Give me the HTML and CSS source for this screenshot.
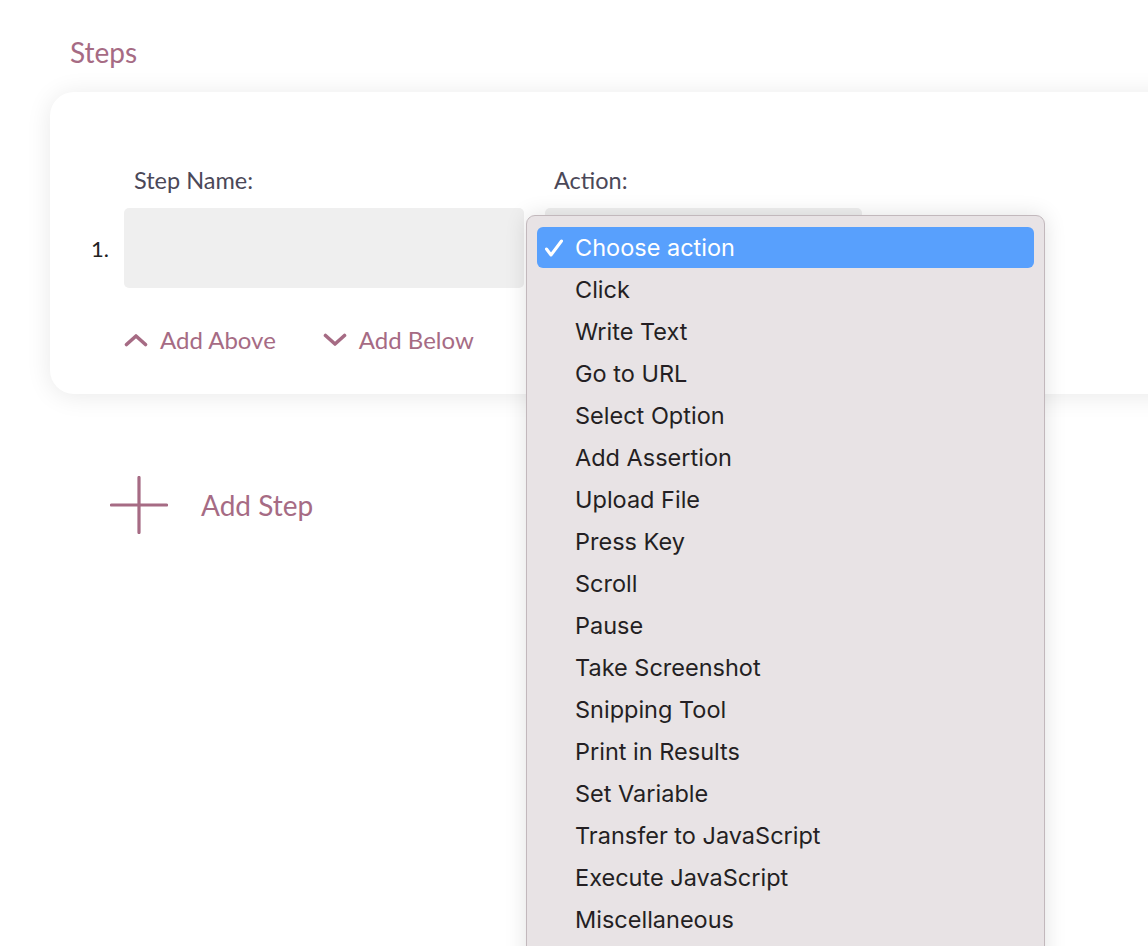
FILE: index.html
```html
<!DOCTYPE html>
<html lang="en">
<head>
<meta charset="utf-8">
<title>Steps</title>
<link rel="stylesheet" href="styles.css">
</head>
<body>
<main class="page">
  <h2 class="section-title">Steps</h2>
  <section class="card">
    <div class="step-grid">
      <span></span>
      <label class="field-label">Step Name:</label>
      <label class="field-label">Action:</label>
      <span class="step-num">1.</span>
      <div class="text-input"></div>
      <div class="select-input"></div>
    </div>
    <div class="step-actions">
      <button class="link-btn">
        <svg width="24" height="14" viewBox="0 0 24 14"><path d="M2.5 11.5 L12 3 L21.5 11.5" fill="none" stroke="currentColor" stroke-width="3.6" stroke-linecap="round" stroke-linejoin="round"/></svg>
        <span>Add Above</span>
      </button>
      <button class="link-btn">
        <svg width="24" height="14" viewBox="0 0 24 14"><path d="M2.5 2.5 L12 11 L21.5 2.5" fill="none" stroke="currentColor" stroke-width="3.6" stroke-linecap="round" stroke-linejoin="round"/></svg>
        <span>Add Below</span>
      </button>
    </div>
  </section>
  <button class="add-step">
    <svg width="58" height="58" viewBox="0 0 58 58"><path d="M29 1.5 V56.5 M1.5 29 H56.5" fill="none" stroke="currentColor" stroke-width="3.2" stroke-linecap="round"/></svg>
    <span>Add Step</span>
  </button>

  <ul class="dropdown">
    <li class="opt selected">
      <svg class="check" width="22" height="20" viewBox="0 0 22 20"><path d="M3.5 11 L8 17 L18.5 3" fill="none" stroke="currentColor" stroke-width="3" stroke-linecap="round" stroke-linejoin="round"/></svg>
      Choose action
    </li>
    <li class="opt">Click</li>
    <li class="opt">Write Text</li>
    <li class="opt">Go to URL</li>
    <li class="opt">Select Option</li>
    <li class="opt">Add Assertion</li>
    <li class="opt">Upload File</li>
    <li class="opt">Press Key</li>
    <li class="opt">Scroll</li>
    <li class="opt">Pause</li>
    <li class="opt">Take Screenshot</li>
    <li class="opt">Snipping Tool</li>
    <li class="opt">Print in Results</li>
    <li class="opt">Set Variable</li>
    <li class="opt">Transfer to JavaScript</li>
    <li class="opt">Execute JavaScript</li>
    <li class="opt">Miscellaneous</li>
  </ul>
</main>
</body>
</html>
```

FILE: styles.css
```css
html, body {
  margin: 0;
  padding: 0;
  background: #ffffff;
}
body {
  width: 1148px;
  height: 946px;
  overflow: hidden;
  font-family: Lato, "Open Sans", sans-serif;
}
.page {
  position: relative;
  height: 946px;
}
.section-title {
  margin: 0;
  padding: 35px 0 0 70px;
  font-size: 28px;
  line-height: 34px;
  font-weight: 400;
  color: #a66b84;
}
.card {
  margin: 23px 0 0 50px;
  width: 1200px;
  box-sizing: border-box;
  background: #fff;
  border-radius: 24px;
  box-shadow: 0 2px 26px rgba(0, 0, 0, 0.09);
  padding: 74px 0 40px 0;
}
.step-grid {
  display: grid;
  grid-template-columns: 53px 400px 317px;
  column-gap: 21px;
  row-gap: 14px;
  align-items: center;
}
.field-label {
  font-size: 23.5px;
  line-height: 28px;
  color: #4b4858;
  padding-left: 10px;
}
.field-label + .field-label {
  padding-left: 9px;
}
.step-num {
  padding-left: 41px;
  font-size: 22px;
  color: #222;
}
.text-input, .select-input {
  height: 80px;
  background: #efefef;
  border-radius: 5px;
}
.step-actions {
  display: flex;
  gap: 47px;
  margin: 38px 0 0 74px;
}
.link-btn {
  display: flex;
  align-items: center;
  gap: 12px;
  padding: 0;
  border: 0;
  background: none;
  font-family: inherit;
  font-size: 24px;
  line-height: 28px;
  color: #a66b84;
}
.add-step {
  display: flex;
  align-items: center;
  gap: 33px;
  margin: 82px 0 0 110px;
  padding: 0;
  border: 0;
  background: none;
  font-family: inherit;
  font-size: 28px;
  color: #a66b84;
}
.dropdown {
  position: absolute;
  left: 526px;
  top: 215px;
  width: 519px;
  height: 760px;
  box-sizing: border-box;
  margin: 0;
  padding: 11px 10px;
  list-style: none;
  background: #e8e3e5;
  border: 1px solid #c2b8bc;
  border-radius: 9px;
  box-shadow: 0 0 22px rgba(0, 0, 0, 0.12);
  font-family: Inter, "Liberation Sans", sans-serif;
}
.opt {
  position: relative;
  height: 42px;
  line-height: 42px;
  padding-left: 38px;
  font-size: 23.5px;
  color: #241f23;
}
.opt.selected {
  height: 41px;
  line-height: 41px;
  margin-bottom: 1px;
  background: #58a0fd;
  color: #fff;
  border-radius: 6px;
}
.check {
  position: absolute;
  left: 6px;
  top: 11px;
}
```
